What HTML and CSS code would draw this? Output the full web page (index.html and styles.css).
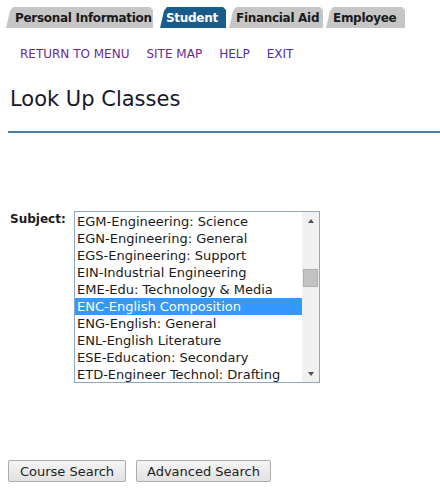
FILE: index.html
```html
<!DOCTYPE html>
<html>
<head>
<meta charset="utf-8">
<link rel="stylesheet" href="styles.css">
</head>
<body>
<div class="tabs">
  <span class="tab t1">Personal Information</span>
  <span class="tab t2 active">Student</span>
  <span class="tab t3">Financial Aid</span>
  <span class="tab t4">Employee</span>
</div>
<div class="nav">
  <a class="visited">RETURN TO MENU</a>
  <a class="visited">SITE MAP</a>
  <a class="link">HELP</a>
  <a class="link">EXIT</a>
</div>
<h1 class="title">Look Up Classes</h1>
<div class="rule"></div>
<div class="subject">
  <span class="label">Subject:</span>
  <div class="listbox">
    <div class="options">
      <div class="opt">EGM-Engineering: Science</div>
      <div class="opt">EGN-Engineering: General</div>
      <div class="opt">EGS-Engineering: Support</div>
      <div class="opt">EIN-Industrial Engineering</div>
      <div class="opt">EME-Edu: Technology &amp; Media</div>
      <div class="opt sel">ENC-English Composition</div>
      <div class="opt">ENG-English: General</div>
      <div class="opt">ENL-English Literature</div>
      <div class="opt">ESE-Education: Secondary</div>
      <div class="opt">ETD-Engineer Technol: Drafting</div>
    </div>
    <div class="sbar">
      <div class="arrow up"></div>
      <div class="track"><div class="thumb"></div></div>
      <div class="arrow down"></div>
    </div>
  </div>
</div>
<div class="buttons">
  <button class="btn b1">Course Search</button>
  <button class="btn b2">Advanced Search</button>
</div>
</body>
</html>
```
FILE: styles.css
```css
html, body {
  margin: 0;
  padding: 0;
  background: #ffffff;
  font-family: "DejaVu Sans", Verdana, sans-serif;
  color: #1a1a1a;
}
.tabs {
  display: flex;
  padding: 7px 0 0 6px;
  height: 21px;
}
.tab {
  display: flex;
  align-items: center;
  height: 21px;
  background: #c6c6c6;
  font-weight: bold;
  font-size: 12px;
  letter-spacing: -0.3px;
  color: #1a1a1a;
  box-sizing: border-box;
  clip-path: polygon(0 100%, 4px 4px, 7px 0, calc(100% - 3px) 0, 100% 3px, 100% 100%);
  white-space: nowrap;
}
.t1 { width: 147px; padding-left: 9px; }
.t2 { width: 66px; margin-left: 7px; padding-left: 6px; }
.t3 { width: 94px; margin-left: 3px; padding-left: 7px; }
.t4 { width: 79px; margin-left: 3px; padding-left: 7px; }
.tab.active {
  background: #185c8c;
  color: #ffffff;
}
.nav {
  display: flex;
  padding: 19px 0 0 20px;
  font-size: 12px;
  line-height: 14px;
}
.nav a { margin-right: 17px; }
.nav a.visited { color: #6a2c8e; }
.nav a.link { color: #4630b0; }
.title {
  margin: 25px 0 0 10px;
  font-size: 21px;
  font-weight: normal;
  line-height: 26px;
  color: #16162a;
}
.rule {
  margin: 19px 0 0 8px;
  height: 2px;
  background: #4a7fa3;
}
.subject {
  display: flex;
  align-items: flex-start;
  margin: 78px 0 0 10px;
}
.label {
  font-weight: bold;
  font-size: 12px;
  width: 64px;
  padding-top: 1px;
}
.listbox {
  display: flex;
  width: 246px;
  height: 172px;
  box-sizing: border-box;
  border: 1px solid #8ca6c6;
  background: #fff;
}
.options {
  flex: 1;
  padding-top: 1px;
}
.opt {
  height: 17px;
  line-height: 17px;
  font-size: 13px;
  padding-left: 2px;
  white-space: nowrap;
  color: #1a1a1a;
}
.opt.sel {
  background: #3399ff;
  color: #ffffff;
}
.sbar {
  width: 17px;
  display: flex;
  flex-direction: column;
  background: #f0f0f0;
}
.arrow {
  height: 17px;
  display: flex;
  align-items: center;
  justify-content: center;
}
.arrow::before {
  content: "";
  width: 0;
  height: 0;
  border-left: 3.5px solid transparent;
  border-right: 3.5px solid transparent;
}
.arrow.up::before { border-bottom: 4px solid #505050; }
.arrow.down::before { border-top: 4px solid #505050; }
.track {
  flex: 1;
  padding-top: 40px;
}
.thumb {
  margin: 0 1px;
  height: 18px;
  background: #c2c2c2;
  border: 1px solid #b0b0b0;
  box-sizing: border-box;
}
.buttons {
  display: flex;
  gap: 10px;
  margin: 77px 0 0 8px;
}
.btn {
  height: 22px;
  font-family: "DejaVu Sans", Verdana, sans-serif;
  font-size: 13px;
  color: #222;
  border: 1px solid #acacac;
  border-radius: 2px;
  background: linear-gradient(#f4f4f4, #e2e2e2);
  padding: 0;
}
.b1 { width: 118px; }
.b2 { width: 135px; }
```
